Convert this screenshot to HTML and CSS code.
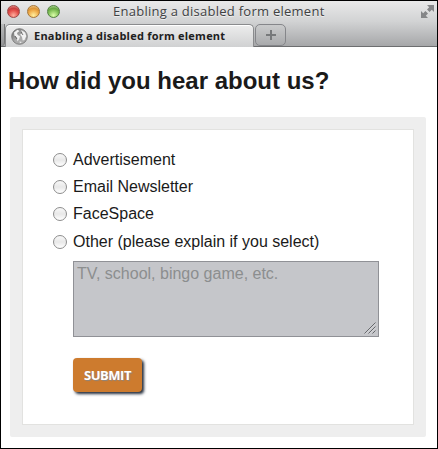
FILE: index.html
```html
<!DOCTYPE html>
<html lang="en">
<head>
<meta charset="utf-8">
<title>Enabling a disabled form element</title>
<link rel="stylesheet" href="styles.css">
</head>
<body>
<div class="window">
  <header class="chrome">
    <div class="titlebar">
      <div class="lights"><i class="light red"></i><i class="light yellow"></i><i class="light green"></i></div>
      <div class="title"><span>Enabling a disabled form element</span></div>
      <svg class="expand" width="15" height="15" viewBox="0 0 15 15"><path d="M7 1H14V8L11.8 5.8L9.6 8L7 5.4L9.2 3.2ZM1 7L3.2 9.2L5.4 7L8 9.6L5.8 11.8L8 14H1Z"/></svg>
    </div>
    <div class="tabs">
      <div class="edge"></div>
      <div class="tab">
        <svg class="globe" width="17" height="17" viewBox="0 0 17 17">
          <defs><linearGradient id="g" x1="0" y1="0" x2="1" y2="1"><stop offset="0" stop-color="#666"/><stop offset=".5" stop-color="#aaa"/><stop offset="1" stop-color="#aaa"/></linearGradient></defs>
          <circle cx="8.5" cy="8.5" r="7.8" fill="url(#g)" stroke="#777" stroke-width=".9"/>
          <path d="M3 4.5L6.5 1.8L8.5 3L6 5L6.7 7L9 8.2L8.2 11L6.5 13.5L5.7 9.5L3.4 7.5ZM10 2L14 4.5L15.3 8L13.5 12L11.7 12.5L11 9L9.2 6.5L11.5 5ZM8.5 13.5L11 14L9 15.3Z" fill="#f1f1f1"/>
          <path d="M4 8L6 11M10 4L12 7" stroke="#555" stroke-width=".8"/>
        </svg>
        <span>Enabling a disabled form element</span>
      </div>
      <div class="newtab"><svg width="12" height="12" viewBox="0 0 12 12"><path d="M6 1V11M1 6H11" stroke="#77797b" stroke-width="2"/></svg></div>
    </div>
  </header>
  <main>
    <h1>How did you hear about us?</h1>
    <form class="panel">
      <label class="choice"><input type="radio" name="source"><span>Advertisement</span></label>
      <label class="choice"><input type="radio" name="source"><span>Email Newsletter</span></label>
      <label class="choice"><input type="radio" name="source"><span>FaceSpace</span></label>
      <label class="choice"><input type="radio" name="source"><span>Other (please explain if you select)</span></label>
      <div class="field">
        <span>TV, school, bingo game, etc.</span>
        <svg class="grip" width="12" height="12" viewBox="0 0 12 12"><path d="M.5 11.5L11.5 .5M4.5 11.5L11.5 4.5M8.5 11.5L11.5 8.5" stroke="#66686c"/><path d="M1.7 11.7L11.7 1.7M5.7 11.7L11.7 5.7" stroke="#e4e4e6" stroke-width=".6"/></svg>
      </div>
      <button type="button" class="submit">SUBMIT</button>
    </form>
  </main>
</div>
</body>
</html>
```
FILE: styles.css
```css
* { box-sizing: border-box; }
body { margin: 0; background: #fff; font-family: "Liberation Sans", Arial, sans-serif; color: #1a1a1a; }
.window { width: 438px; height: 449px; border: 1px solid #000; overflow: hidden; }
.chrome { height: 46px; background: linear-gradient(#e9e9e9, #d2d3d4 45%, #a6a7a9); border-bottom: 1px solid #6d6e70; }
.titlebar { display: flex; height: 23px; justify-content: space-between; }
.lights { display: flex; gap: 7px; padding: 4px 0 0 6px; width: 66px; }
.light { width: 13px; height: 13px; border-radius: 50%; border: 1px solid; }
.red { background: radial-gradient(circle at 50% 85%, #ffb0a0, #e5524d 45%, #c83e3d 65%, #f3aaa5); border-color: #9c4a48; }
.yellow { background: radial-gradient(circle at 50% 85%, #fff0a0, #f0ae4d 45%, #dc9436 65%, #f8dcaa); border-color: #a67639; }
.green { background: radial-gradient(circle at 50% 85%, #dcffaa, #88c55e 45%, #68a844 65%, #c9e8b5); border-color: #527f42; }
.title { font: 13px/21px "Open Sans", sans-serif; letter-spacing: .26px; color: #404143; white-space: nowrap; width: 213px; margin-left: 46px; text-shadow: 0 1px #eee; }
.expand { margin: 3px 2px 0 auto; fill: #858688; }
.tabs { display: flex; height: 22px; }
.edge { width: 4px; height: 22px; background: linear-gradient(#b9babb, #929395); border-right: 1px solid #777; border-bottom-right-radius: 4px; }
.tab { display: flex; align-items: center; width: 249px; height: 23px; border: 1px solid #8a8b8d; border-width: 1px 1px 0; border-radius: 5px 5px 0 0; background: linear-gradient(#ededed, #d0d1d2); box-shadow: inset 0 1px #fff; padding-left: 5px; white-space: nowrap; font: bold 11px/20px "Open Sans", sans-serif; letter-spacing: .23px; color: #202020; }
.globe { margin-right: 6px; flex: none; }
.newtab { display: flex; align-items: center; justify-content: center; width: 31px; height: 22px; border: 1px solid #85868a; border-radius: 5px; background: linear-gradient(#cacbcc, #a9aaac); margin-left: 1px; }
main { padding: 19px 9px 0; }
h1 { font-size: 24px; line-height: 30px; margin: 0 0 21px -2px; white-space: nowrap; }
.panel { width: 416px; height: 320px; border: 12px solid #eee; border-radius: 2px; padding: 17px 0 0 30px; background: #fff; box-shadow: inset 0 0 0 1px #e2e2e0; }
.choice { display: flex; align-items: center; height: 27.3px; font-size: 16px; white-space: nowrap; }
.choice input { appearance: none; flex: none; width: 14px; height: 14px; margin: 0 6px 0 1px; border: 1px solid #8d8d8d; border-radius: 50%; background: linear-gradient(#f8f8f8, #e8e8e8 50%, #fff); }
.field { position: relative; width: 306px; height: 76px; margin: 6px 0 0 21px; border: 1px solid #909196; background: #c5c6ca; padding: 2px 3px; font-size: 16px; line-height: 20px; color: #8c8e8f; }
.grip { position: absolute; right: 2px; bottom: 2px; }
.submit { display: block; width: 69px; height: 34px; margin: 21px 0 0 21px; padding: 0; border: 0; border-radius: 4px; background: #cd7b2e; color: #fff; font: bold 13px/34px "Open Sans", sans-serif; letter-spacing: -.5px; text-align: center; text-shadow: 1px 1px 1px #8a8580; box-shadow: 2px 2px 3px #222b3a; }
```
